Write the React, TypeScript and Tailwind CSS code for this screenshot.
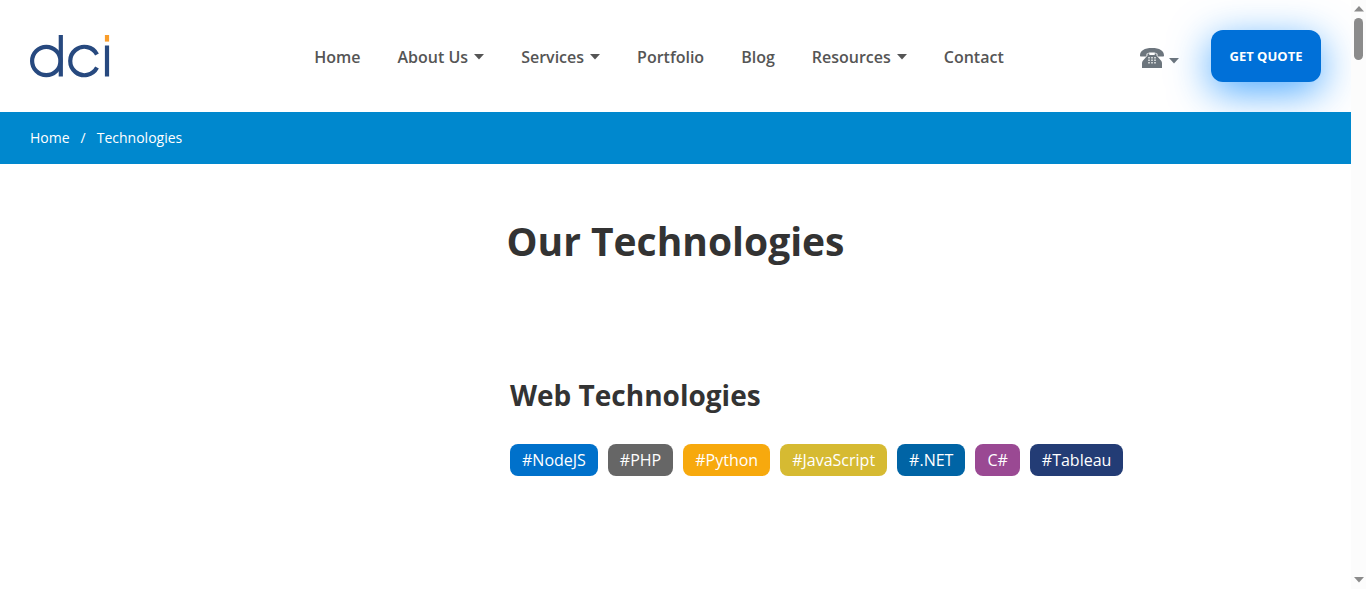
const navItems = [
  { label: "Home", menu: false },
  { label: "About Us", menu: true },
  { label: "Services", menu: true },
  { label: "Portfolio", menu: false },
  { label: "Blog", menu: false },
  { label: "Resources", menu: true },
  { label: "Contact", menu: false },
];

const tags = [
  { label: "#NodeJS", color: "bg-[#0071cb]" },
  { label: "#PHP", color: "bg-[#666666]" },
  { label: "#Python", color: "bg-[#f7a90d]" },
  { label: "#JavaScript", color: "bg-[#d6ba32]" },
  { label: "#.NET", color: "bg-[#0064a5]" },
  { label: "C#", color: "bg-[#9a4993]" },
  { label: "#Tableau", color: "bg-[#233c75]" },
];

function Caret() {
  return (
    <svg aria-hidden="true" width="10" height="6" viewBox="0 0 10 6" fill="currentColor">
      <path d="M0 0h10L5 5.500z" />
    </svg>
  );
}

function Logo() {
  return (
    <svg role="img" aria-label="dci" width="80" height="43" viewBox="0 0 80 43" fill="none" stroke="#27497f" strokeWidth="4.200">
      <circle cx="16.3" cy="26" r="14.2" />
      <path d="M30.8 0v41.500" />
      <path d="M67 19.400A14.200 14.200 0 1 0 67 32.600" />
      <path d="M77 10.500v31" />
      <path d="M77 0v6.600" stroke="#f99d2a" />
    </svg>
  );
}

function Phone() {
  return (
    <svg aria-hidden="true" width="24" height="20" viewBox="0 0 24 20">
      <path
        fill="#6c757d"
        d="M0 7.500C0 2.500 4.500 0 12 0s12 2.500 12 7.500c0 .6-.4 1-1 1h-4.500c-.6 0-1-.4-1-1V6.200c0-1-2-1.700-5.500-1.700s-5.500.7-5.500 1.700v1.300c0 .6-.4 1-1 1H1c-.6 0-1-.4-1-1z"
      />
      <path fill="#6c757d" d="M7.500 5.500h1.800V7h5.400V5.500h1.800v2l4 4.500c1 1 1.500 2 1.500 3.500V20H2v-4.500c0-1.500.5-2.500 1.500-3.500l4-4.500z" />
      <path
        fill="#fff"
        d="M8 9h2v1.400H8zM11 9h2v1.400h-2zM14 9h2v1.400h-2zM8 11.500h2v1.400H8zM11 11.500h2v1.400h-2zM14 11.500h2v1.400h-2zM8 14h2v1.400H8zM11 14h2v1.400h-2zM14 14h2v1.400h-2z"
        opacity=".65"
      />
    </svg>
  );
}

export default function App() {
  return (
    <div className="flex min-h-screen bg-white font-['Open_Sans',sans-serif] text-[#333333]">
      <div className="min-w-0 flex-1">
        <header className="flex h-28 items-center justify-between px-[30px]">
          <a href="#home" className="w-[148px]">
            <Logo />
          </a>
          <nav aria-label="Main" className="pt-[2px]">
            <ul className="flex gap-[37px] text-base leading-6 font-semibold text-[#555555]">
              {navItems.map((item) => (
                <li key={item.label}>
                  <a href="#nav" className="flex items-center gap-[6px] whitespace-nowrap">
                    {item.label}
                    {item.menu && <Caret />}
                  </a>
                </li>
              ))}
            </ul>
          </nav>
          <div className="flex items-center gap-8">
            <button type="button" aria-label="Phone numbers" className="flex items-end gap-[5px] pt-1 text-[#6c757d]">
              <Phone />
              <span className="pb-1">
                <Caret />
              </span>
            </button>
            <button
              type="button"
              className="h-[52px] w-[110px] rounded-xl bg-[#0070d8] pt-px text-[13px] font-bold text-white shadow-[0_10px_40px_0_#0084ffb5]"
            >
              GET QUOTE
            </button>
          </div>
        </header>
        <nav aria-label="Breadcrumb" className="relative bg-[#0088ce] px-[30px] py-[14px]">
          <ol className="flex gap-[11px] text-sm leading-6 text-white">
            <li>
              <a href="#home">Home</a>
            </li>
            <li aria-hidden="true">/</li>
            <li>Technologies</li>
          </ol>
        </nav>
        <main className="px-[30px]">
          <h1 className="pt-[53px] text-center text-[39px] leading-12 font-bold">Our Technologies</h1>
          <section className="ml-[480px] pt-28">
            <h2 className="text-[28px] leading-9 font-bold">Web Technologies</h2>
            <ul className="flex gap-[10px] pt-[31px]">
              {tags.map((tag) => (
                <li key={tag.label}>
                  <a href="#tag" className={`block rounded-lg px-3 py-1 text-base leading-6 whitespace-nowrap text-white ${tag.color}`}>
                    {tag.label}
                  </a>
                </li>
              ))}
            </ul>
          </section>
        </main>
      </div>
      <div aria-hidden="true" className="relative flex h-screen w-[15px] flex-col items-center justify-between bg-[#fcfcfc] py-[6px] text-[#8b8b8b]">
        <div className="flex flex-col items-center gap-[6px]">
          <svg width="10" height="6" viewBox="0 0 10 6" fill="currentColor">
            <path d="M0 5.500h10L5 0z" />
          </svg>
          <div className="h-[42px] w-[9px] rounded-full bg-[#8b8b8b]" />
        </div>
        <Caret />
      </div>
    </div>
  );
}
